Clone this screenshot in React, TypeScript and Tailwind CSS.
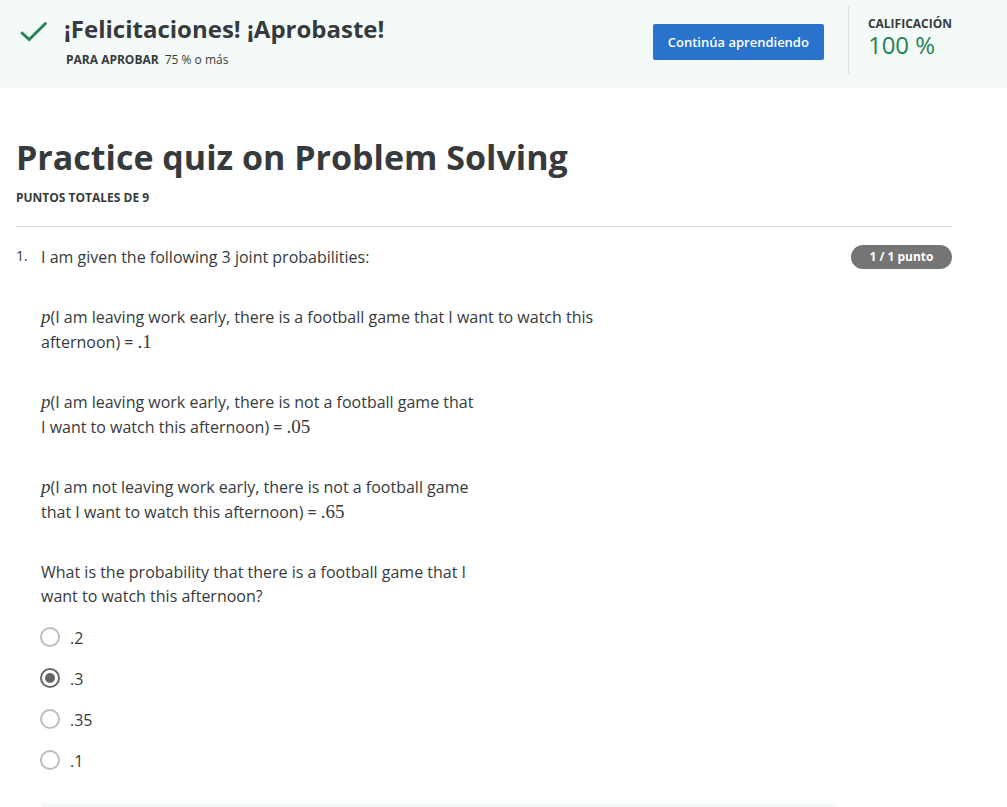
import { useState, type ReactNode } from "react";

function MathText({ children, italic = false }: { children: ReactNode; italic?: boolean }) {
  return (
    <span className={`font-['Liberation_Serif',serif] text-[19px] leading-none ${italic ? "italic" : ""}`}>
      {children}
    </span>
  );
}

function ResultHeader() {
  return (
    <header className="flex h-[88px] items-start justify-between bg-[#f4faf8] pr-[55px] pl-5">
      <div className="flex">
        <svg viewBox="0 0 28 22" className="mt-[21px] h-[22px] w-7 shrink-0" aria-hidden="true">
          <path d="M1.2 11.2 L9.2 18.6 L26.2 1.8" fill="none" stroke="#1f8354" strokeWidth="2.8" />
        </svg>
        <div className="ml-4 pt-[11px]">
          <h2 className="text-2xl leading-9 font-bold">¡Felicitaciones! ¡Aprobaste!</h2>
          <p className="mt-1 ml-0.5 text-xs leading-[18px]">
            <span className="mr-1.5 font-bold">PARA APROBAR</span>75 % o más
          </p>
        </div>
      </div>
      <div className="flex pt-1.5">
        <button
          type="button"
          className="mt-[18px] mr-6 h-9 rounded-xs bg-[#2a73cc] px-[15px] pt-0.5 text-[13px] font-semibold text-white"
        >
          Continúa aprendiendo
        </button>
        <div className="h-[68px] border-l border-[#dcdfde] pt-[9px] pl-[19px]">
          <p className="text-xs leading-[18px] font-bold">CALIFICACIÓN</p>
          <p className="text-2xl leading-6 text-[#1f8354]">100 %</p>
        </div>
      </div>
    </header>
  );
}

const options = [".2", ".3", ".35", ".1"];

export default function App() {
  const [answer, setAnswer] = useState(".3");

  return (
    <div className="bg-white font-['Open_Sans',sans-serif] text-[#373a3c]">
      <ResultHeader />
      <main className="pr-[55px] pl-4">
        <h1 className="pt-[45px] text-[34px] leading-[48px] font-bold">Practice quiz on Problem Solving</h1>
        <p className="mt-2 text-xs leading-[18px] font-bold">PUNTOS TOTALES DE 9</p>
        <section className="mt-[19px] flex items-start border-t border-[#dcdcdc] pt-[18px]">
          <span className="w-[25px] shrink-0 text-sm leading-[22px]">1.</span>
          <div className="min-w-0 flex-1">
            <div className="flex flex-col gap-[35px] text-base leading-[25px]">
              <p>I am given the following 3 joint probabilities:</p>
              <p>
                <MathText italic>p</MathText>(I am leaving work early, there is a football game that I want to watch this
                <br />
                afternoon) = <MathText>.1</MathText>
              </p>
              <p>
                <MathText italic>p</MathText>(I am leaving work early, there is not a football game that
                <br />I want to watch this afternoon) = <MathText>.05</MathText>
              </p>
              <p>
                <MathText italic>p</MathText>(I am not leaving work early, there is not a football game
                <br />
                that I want to watch this afternoon) = <MathText>.65</MathText>
              </p>
              <p className="leading-6">
                What is the probability that there is a football game that I
                <br />
                want to watch this afternoon?
              </p>
            </div>
            <fieldset className="mt-[18px] -ml-px flex flex-col gap-[17px]">
              {options.map((option) => (
                <label key={option} className="flex h-6 items-center gap-2.5 text-base leading-6">
                  <input
                    type="radio"
                    name="probability"
                    value={option}
                    checked={answer === option}
                    onChange={() => setAnswer(option)}
                    className="mb-0.5 grid size-5 shrink-0 appearance-none place-items-center rounded-full border-2 border-[#bdbdbd] bg-white before:hidden before:size-2.5 before:rounded-full before:bg-[#666666] before:content-[''] checked:border-[#666666] checked:before:block"
                  />
                  {option}
                </label>
              ))}
            </fieldset>
            <div className="mt-[30px] h-1 bg-[#f5faf8]" />
          </div>
          <span className="ml-[15px] flex h-6 w-[101px] shrink-0 items-center justify-center rounded-full bg-[#757575] text-xs font-bold text-white">
            1 / 1 punto
          </span>
        </section>
      </main>
    </div>
  );
}
